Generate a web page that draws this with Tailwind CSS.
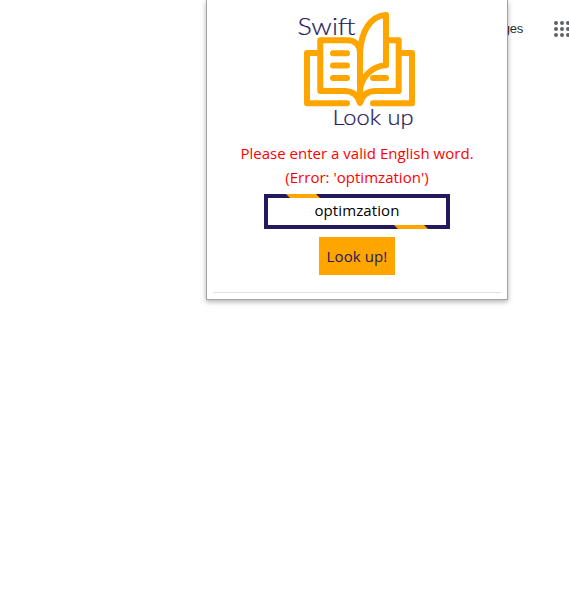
<!DOCTYPE html>
<html lang="en">
<head>
<meta charset="utf-8">
<title>Swift Look up</title>
<script src="https://cdn.jsdelivr.net/npm/@tailwindcss/browser@4"></script>
</head>
<body class="relative h-[598px] w-[569px] overflow-hidden bg-white">
<header class="flex h-[58px] items-center justify-end">
  <span class="mr-[31px] text-[13px] leading-4 tracking-[-0.2px] text-black/87" style="font-family:'Liberation Sans',Arial,sans-serif">Images</span>
  <svg class="h-4 w-[15px] shrink-0" viewBox="0 0 15 16" fill="#5f6368">
    <g id="dots"><circle cx="2" cy="2" r="2"/><circle cx="8" cy="2" r="2"/><circle cx="14" cy="2" r="2"/></g>
    <use href="#dots" y="6"/><use href="#dots" y="12"/>
  </svg>
</header>
<main class="absolute left-[206px] top-0 flex h-[300px] w-[302px] flex-col items-center border-x border-b border-[#a3a3a3] bg-white shadow-[0_2px_5px_rgba(0,0,0,0.3)]" style="font-family:'Open Sans','Noto Sans',sans-serif">
  <svg class="mt-[5px] h-[130px] w-[135px] shrink-0" viewBox="290 5 135 130" fill="none">
    <g stroke="#ffa500" stroke-width="6" stroke-linecap="round" stroke-linejoin="round">
      <path d="M319 53H307V103.300H347M373 103.300H412V53H400"/>
      <path d="M360 53C360 45 355 40.300 347 40.300H320.300V91H344C353 91 358 95 360 103C362 95 367 91 376 91H398.700V40.300H387"/>
      <path d="M360 100V53C361 32 370 16 386 15V65.300C372 66 361 77 360 91"/>
      <path d="M333 53.300H347M333 65.500H347M333 78H347M373 78H386"/>
    </g>
    <g fill="#24195d" stroke="#24195d" stroke-width="0.200" style="font-family:Lato,sans-serif;font-weight:300">
      <text x="297.500" y="34.500" font-size="24" textLength="58" lengthAdjust="spacingAndGlyphs">Swift</text>
      <text x="332.500" y="125.300" font-size="22" textLength="81" lengthAdjust="spacingAndGlyphs">Look up</text>
    </g>
  </svg>
  <p class="mt-1.5 whitespace-nowrap text-center text-[15px] leading-6 tracking-[0.02px] text-[#ff0000]">Please enter a valid English word.<br>(Error: 'optimzation')</p>
  <div class="relative mt-[5px] flex h-[35px] w-[186px] items-center justify-center border-4 border-[#24195d] pb-[3px]">
    <svg class="absolute -left-1 -top-1 h-[35px] w-[186px]" fill="#ffa500"><path d="M22 0H52L56 4H26ZM130 31H160L164 35H134Z"/></svg>
    <span class="relative text-[15px] leading-6 tracking-[0.1px] text-black">optimzation</span>
  </div>
  <button class="mt-2 flex h-[38px] w-[76px] shrink-0 items-center justify-center whitespace-nowrap bg-[#ffa500] text-[15px] leading-6 tracking-[0.1px] text-[#24195d]">Look up!</button>
  <hr class="mt-[17px] w-[288px] border-t border-[#dee2e6]">
</main>
</body>
</html>
